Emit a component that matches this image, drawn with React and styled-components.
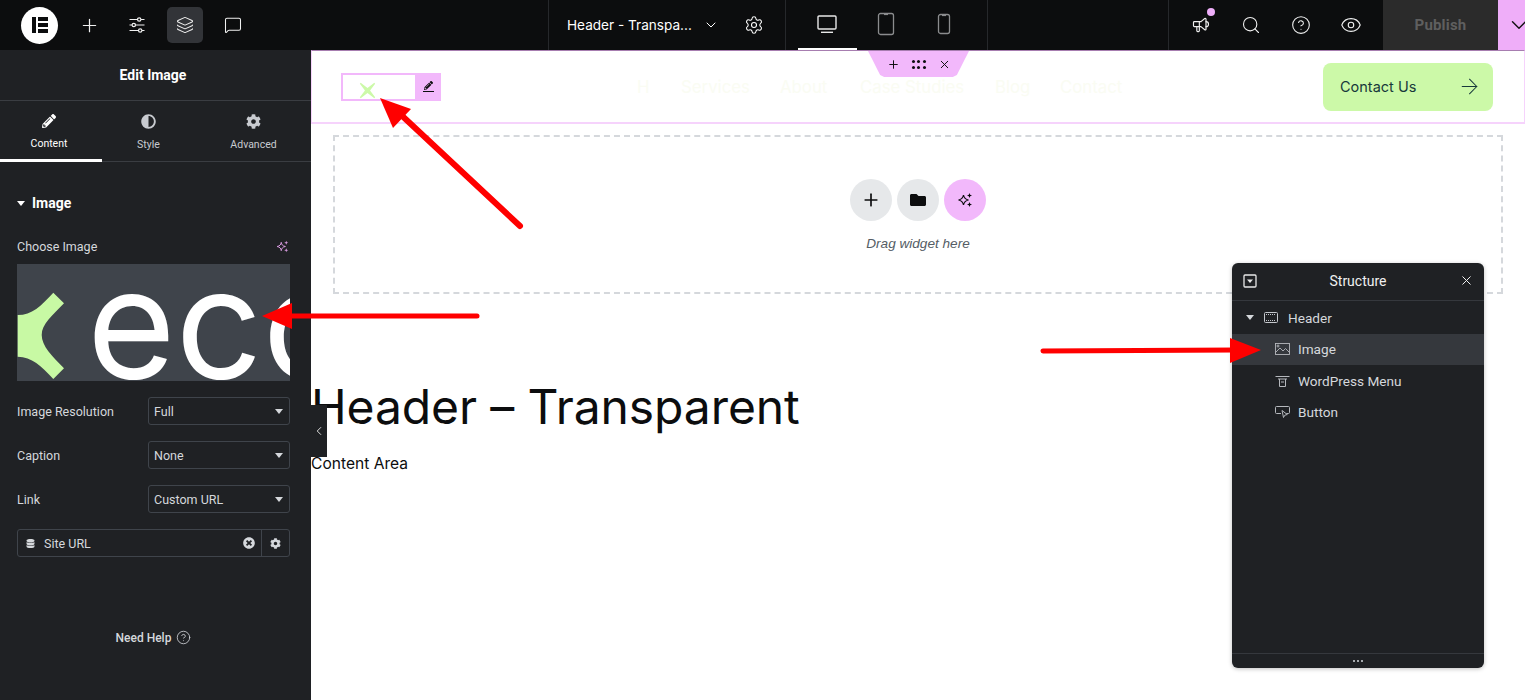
import React from "react";
import styled, { createGlobalStyle } from "styled-components";
import {
  Plus,
  Layers,
  MessageSquare,
  ChevronDown,
  ChevronLeft,
  Settings,
  Search,
  CircleHelp,
  Eye,
  X,
  ArrowRight,
} from "lucide-react";
import { TbSpeakerphone } from "react-icons/tb";
import { FaPencilAlt, FaAdjust, FaCog, FaDatabase, FaTimesCircle, FaFolder } from "react-icons/fa";

const GlobalStyle = createGlobalStyle`
  html, body {
    margin: 0;
    padding: 0;
    background: #fff;
  }
  * {
    box-sizing: border-box;
  }
`;

// Overall page
const Page = styled.div`
  position: relative;
  width: 1525px;
  height: 700px;
  overflow: hidden;
  display: flex;
  flex-direction: column;
  font-family: Roboto, "Liberation Sans", sans-serif;
`;

// Top bar
const TopBar = styled.header`
  height: 50px;
  flex: none;
  display: flex;
  background: #0c0d0e;
  color: #fff;
`;

const ToolGroup = styled.div`
  width: 549px;
  display: flex;
  align-items: center;
  padding-left: 21px;
  gap: 12px;
  border-right: 1px solid #26282b;
`;

const LogoBadge = styled.div`
  width: 37px;
  height: 37px;
  flex: none;
  margin-right: 1px;
  border-radius: 50%;
  background: #fff;
  display: flex;
  align-items: center;
  justify-content: center;
  gap: 2px;
`;

const LogoStem = styled.span`
  width: 4px;
  height: 16px;
  background: #0c0d0e;
`;

const LogoBars = styled.span`
  width: 10px;
  height: 16px;
  display: flex;
  flex-direction: column;
  justify-content: space-between;

  i {
    display: block;
    height: 4px;
    background: #0c0d0e;
  }
`;

const ToolButton = styled.button`
  width: 36px;
  height: 36px;
  padding: 0;
  border: none;
  border-radius: 5px;
  color: #f0f0f0;
  background: ${(p) => (p.$active ? "#323438" : "transparent")};
  display: flex;
  align-items: center;
  justify-content: center;
`;

const DocGroup = styled.div`
  width: 237px;
  display: flex;
  align-items: center;
  padding-left: 18px;
  border-right: 1px solid #26282b;
`;

const DocTitle = styled.span`
  width: 136px;
  font: 400 13.6px Inter, sans-serif;
  white-space: nowrap;
`;

const DocGear = styled.span`
  margin-left: 25px;
  display: flex;
`;

const DeviceGroup = styled.div`
  width: 202px;
  display: flex;
  padding-left: 12px;
  border-right: 1px solid #26282b;
`;

const DeviceTab = styled.div`
  width: 58.5px;
  display: flex;
  align-items: center;
  justify-content: center;
  border-bottom: 2px solid ${(p) => (p.$active ? "#fff" : "transparent")};
  color: ${(p) => (p.$active ? "#e8e8e8" : "#8b8c8e")};
`;

const BarSpacer = styled.div`
  flex: 1;
  border-right: 1px solid #26282b;
`;

const ActionGroup = styled.div`
  width: 214px;
  flex: none;
  display: flex;
  align-items: center;
  padding-left: 7px;
`;

const ActionSlot = styled.span`
  position: relative;
  width: 50px;
  display: flex;
  justify-content: center;
  color: #f0f0f0;
`;

const NoticeDot = styled.i`
  position: absolute;
  top: -7px;
  right: 11px;
  width: 8px;
  height: 8px;
  border-radius: 50%;
  background: #efaef9;
`;

const PublishButton = styled.div`
  width: 115px;
  flex: none;
  display: flex;
  align-items: center;
  justify-content: center;
  background: #2b2b2b;
  color: #5f5f5f;
  font: 700 15px Roboto, sans-serif;
  letter-spacing: 0.2px;
`;

const PublishMore = styled.div`
  width: 27px;
  flex: none;
  overflow: hidden;
  padding-left: 8px;
  display: flex;
  align-items: center;
  background: #efaef9;
  color: #111;

  svg {
    flex: none;
  }
`;

// Main split
const Workspace = styled.div`
  flex: 1;
  display: flex;
  min-height: 0;
`;

// Left settings panel
const SidePanel = styled.aside`
  width: 311px;
  flex: none;
  display: flex;
  flex-direction: column;
  background: #1f2124;
  color: #d5d8dc;
`;

const PanelTitle = styled.div`
  height: 51px;
  flex: none;
  padding-right: 5px;
  display: flex;
  align-items: center;
  justify-content: center;
  border-bottom: 1px solid #3a3d42;
  color: #fff;
  font-size: 14px;
  font-weight: 700;
`;

const PanelTabs = styled.div`
  height: 61px;
  flex: none;
  display: flex;
  border-bottom: 1px solid #3a3d42;
`;

const PanelTab = styled.div`
  width: ${(p) => p.$width}px;
  height: 61px;
  padding: 13px ${(p) => p.$shift || 0}px 0 0;
  display: flex;
  flex-direction: column;
  align-items: center;
  gap: 9px;
  font-size: 10.5px;
  color: ${(p) => (p.$active ? "#fff" : "#c8cbd0")};
  border-bottom: 3px solid ${(p) => (p.$active ? "#fff" : "transparent")};
`;

const PanelBody = styled.div`
  flex: 1;
  display: flex;
  flex-direction: column;
  padding: 32px 21px 0 17px;
`;

const SectionTitle = styled.div`
  display: flex;
  align-items: center;
  gap: 7px;
  height: 18px;
  color: #fff;
  font-size: 14px;
  font-weight: 700;
`;

const Caret = styled.i`
  display: block;
  flex: none;
  width: 0;
  height: 0;
  border-left: 4px solid transparent;
  border-right: 4px solid transparent;
  border-top: 5px solid ${(p) => p.$color || "#fff"};
`;

const FieldHead = styled.div`
  margin-top: 26px;
  height: 16px;
  display: flex;
  align-items: center;
  justify-content: space-between;
  font-size: 12.5px;
`;

const Preview = styled.div`
  margin-top: 10px;
  height: 117px;
  background: #3f444b;
  overflow: hidden;

  svg {
    display: block;
  }
`;

const FieldRow = styled.div`
  margin-top: 16px;
  display: flex;
  align-items: center;
  justify-content: space-between;
  font-size: 12.5px;
`;

const SelectBox = styled.div`
  width: 142px;
  height: 28px;
  padding: 0 6px 0 5px;
  display: flex;
  align-items: center;
  justify-content: space-between;
  border: 1px solid #3f444b;
  border-radius: 3px;
  font-size: 12.5px;
`;

const DynamicField = styled.div`
  margin-top: 16px;
  height: 28px;
  display: flex;
  align-items: center;
  border: 1px solid #3f444b;
  border-radius: 3px;
  font-size: 12.5px;
`;

const DynamicLabel = styled.div`
  flex: 1;
  height: 100%;
  padding: 0 6px 0 8px;
  display: flex;
  align-items: center;
  gap: 9px;
  border-right: 1px solid #3f444b;

  span {
    flex: 1;
  }
`;

const DynamicGear = styled.div`
  width: 27px;
  display: flex;
  justify-content: center;
`;

const HelpLink = styled.div`
  margin-top: 73px;
  display: flex;
  justify-content: center;
  align-items: center;
  gap: 5px;
  font-size: 12px;
  font-weight: 500;
`;

const CollapseHandle = styled.div`
  position: absolute;
  left: 311px;
  top: 405px;
  width: 16px;
  height: 52px;
  display: flex;
  align-items: center;
  justify-content: center;
  background: #1f2124;
  color: #e8e8e8;
`;

// Page canvas
const Canvas = styled.main`
  flex: 1;
  min-width: 0;
  background: #fff;
  color: #0c0d0e;
  font-family: Inter, sans-serif;
`;

const HeaderFrame = styled.section`
  height: 74px;
  display: flex;
  align-items: center;
  padding: 0 30px 0 29px;
  border: 1px solid #f6d3fc;
  border-top-color: #a77db0;
  border-bottom-width: 2px;
`;

const ImageWidget = styled.div`
  width: 100px;
  height: 28px;
  display: flex;
  border: 2px solid #f2b8fb;
  border-right: none;
  background: #fff;
`;

const WidgetLogo = styled.div`
  width: 72px;
  display: flex;
  align-items: flex-end;
  padding-left: 16px;
`;

const WidgetEdit = styled.div`
  flex: 1;
  display: flex;
  align-items: center;
  justify-content: center;
  background: #f2b8fb;
  color: #0c0d0e;
  flex-direction: column;
  gap: 1px;

  i {
    display: block;
    width: 11px;
    height: 1px;
    background: #0c0d0e;
  }
`;

const NavList = styled.nav`
  margin-left: 196px;
  display: flex;
  font-size: 16.8px;
  color: #fafcf3;
`;

const NavItem = styled.span`
  width: ${(p) => p.$width}px;
  white-space: nowrap;
`;

const ContactButton = styled.div`
  margin-left: auto;
  margin-right: 1px;
  width: 170px;
  height: 48px;
  padding: 0 11px 0 17px;
  display: flex;
  align-items: center;
  justify-content: space-between;
  border-radius: 8px;
  background: #ccf9a8;
  color: #17393b;
  font-size: 14.5px;
`;

const SectionHandle = styled.div`
  position: absolute;
  left: 868px;
  top: 51px;
  width: 101px;
  height: 26px;
  display: flex;
  align-items: center;
  justify-content: center;
  gap: 12px;
  background: #f2b8fb;
  clip-path: polygon(0 0, 100% 0, 88% 92%, 84% 100%, 16% 100%, 12% 92%);
  color: #0c0d0e;
`;

const HandleDots = styled.span`
  width: 14px;
  display: grid;
  grid-template-columns: repeat(3, 3px);
  justify-content: space-between;
  row-gap: 3px;

  i {
    width: 3px;
    height: 3px;
    border-radius: 50%;
    background: #0c0d0e;
  }
`;

const DropZone = styled.div`
  height: 159px;
  margin: 11px 22px 0;
  padding-top: 42px;
  display: flex;
  flex-direction: column;
  align-items: center;
  border: 2px dashed #d5d8dc;
`;

const DropButtons = styled.div`
  display: flex;
  gap: 5px;
`;

const RoundButton = styled.span`
  width: 42px;
  height: 42px;
  display: flex;
  align-items: center;
  justify-content: center;
  border-radius: 50%;
  background: ${(p) => (p.$accent ? "#f2b8fb" : "#e6e8ea")};
  color: #0c0d0e;
`;

const DropHint = styled.div`
  margin-top: 15px;
  font: italic 400 13.6px "Liberation Sans", sans-serif;
  color: #555d65;
`;

const PageTitle = styled.h1`
  margin: 84px 0 0;
  font-size: 48px;
  line-height: 58px;
  font-weight: 400;
  letter-spacing: -0.1px;
  white-space: nowrap;
`;

const PageContent = styled.p`
  margin: 18px 0 0;
  font-size: 15.6px;
  line-height: 20px;
`;

// Floating structure panel
const StructurePanel = styled.div`
  position: absolute;
  left: 1232px;
  top: 263px;
  width: 252px;
  height: 405px;
  display: flex;
  flex-direction: column;
  border-radius: 6px;
  background: #1f2124;
  color: #d5d8dc;
  box-shadow: 0 1px 4px rgba(0, 0, 0, 0.25);
`;

const StructureHead = styled.div`
  height: 38px;
  flex: none;
  padding: 0 10px 2px 11px;
  display: flex;
  align-items: center;
  justify-content: space-between;
  border-bottom: 1px solid #35383d;
  color: #f0f0f0;
  font-size: 14px;
`;

const StructureRows = styled.div`
  flex: 1;
  padding-top: 1px;
`;

const StructureRow = styled.div`
  height: 31.5px;
  display: flex;
  align-items: center;
  gap: ${(p) => (p.$root ? 10 : 8)}px;
  padding-left: ${(p) => (p.$root ? 14 : 43)}px;
  background: ${(p) => (p.$active ? "#35383d" : "transparent")};
  font-size: 13.6px;
`;

const StructureFoot = styled.div`
  height: 15px;
  display: flex;
  align-items: center;
  justify-content: center;
  gap: 2px;
  border-top: 1px solid #35383d;

  i {
    width: 2px;
    height: 2px;
    border-radius: 50%;
    background: #d5d8dc;
  }
`;

const Annotations = styled.svg`
  position: absolute;
  inset: 0;
  pointer-events: none;
`;

function SlidersIcon() {
  return (
    <svg width="18" height="18" viewBox="0 0 18 18" fill="none" stroke="currentColor" strokeWidth="1.2">
      <path d="M1.500 3.500h8m3.500 0h3.500M1.500 9h2.500m3.500 0h9M1.500 14.500h9m3.500 0h2.500" />
      <circle cx="11.200" cy="3.500" r="1.700" />
      <circle cx="5.800" cy="9" r="1.700" />
      <circle cx="12.200" cy="14.500" r="1.700" />
    </svg>
  );
}

function DesktopIcon() {
  return (
    <svg width="20" height="20" viewBox="0 0 20 20" fill="none" stroke="currentColor" strokeWidth="1.4">
      <rect x="1" y="2" width="18" height="13" rx="1" />
      <path d="M4 18.300h12" />
    </svg>
  );
}

function TabletIcon() {
  return (
    <svg width="18" height="24" viewBox="0 0 18 24" fill="none" stroke="currentColor" strokeWidth="1.300">
      <rect x="1.500" y="1.500" width="15" height="21" rx="2" />
      <path d="M7 2.300h4" strokeWidth="1.600" />
    </svg>
  );
}

function PhoneIcon() {
  return (
    <svg width="14" height="22" viewBox="0 0 14 22" fill="none" stroke="currentColor" strokeWidth="1.300">
      <rect x="1.500" y="1.500" width="11" height="19" rx="2" />
      <path d="M5 2.300h4" strokeWidth="1.600" />
    </svg>
  );
}

function SparkleIcon({ size = 18, color = "currentColor" }) {
  return (
    <svg width={size} height={size} viewBox="0 0 18 18">
      <path
        d="M7.500 4C8.100 7 9 8.300 12.500 9C9 9.700 8.100 11 7.500 14C6.900 11 6 9.700 2.500 9C6 8.300 6.900 7 7.500 4Z"
        fill="none"
        stroke={color}
        strokeWidth="1.200"
      />
      <path d="M13.500 2L14.200 3.800L16 4.500L14.200 5.200L13.500 7L12.800 5.200L11 4.500L12.800 3.800Z" fill={color} />
      <path d="M13.500 11L14.200 12.800L16 13.500L14.200 14.200L13.500 16L12.800 14.200L11 13.500L12.800 12.800Z" fill={color} />
    </svg>
  );
}

function BrandMark({ size = 20 }) {
  return (
    <svg width={size} height={size} viewBox="0 0 20 20" fill="#ccf9a8">
      <path d="M2 1L10 7L18 1L19 2L13 10L19 18L18 19L10 13L2 19L1 18L7 10L1 2Z" />
    </svg>
  );
}

function CollapseIcon() {
  return (
    <svg width="14" height="14" viewBox="0 0 14 14">
      <rect x="1" y="1" width="12" height="12" rx="1" fill="none" stroke="#e8e8e8" strokeWidth="1.300" />
      <path d="M4 5.500h6L7 9z" fill="#e8e8e8" />
    </svg>
  );
}

function ContainerIcon() {
  return (
    <svg width="14" height="11" viewBox="0 0 14 11" fill="none" stroke="#c4c7cc" strokeWidth="1">
      <rect x="0.500" y="0.500" width="13" height="10" rx="1" />
      <path d="M2 2.500h10M2 8.500h10" strokeDasharray="1 1" />
    </svg>
  );
}

function PictureIcon() {
  return (
    <svg width="15" height="12" viewBox="0 0 15 12" fill="none" stroke="#b5b8bd" strokeWidth="0.900">
      <rect x="0.500" y="0.500" width="14" height="11" />
      <path d="M0.500 9.500L5 5l3 3 2.500-2.500 4 4" />
      <circle cx="3" cy="3" r="1" />
    </svg>
  );
}

function MenuWidgetIcon() {
  return (
    <svg width="15" height="12" viewBox="0 0 15 12" fill="none" stroke="#b5b8bd" strokeWidth="1">
      <path d="M0.500 1.500h14M3 4h9M4.500 4v7.500h6V4M6 7h3" />
    </svg>
  );
}

function ButtonWidgetIcon() {
  return (
    <svg width="15" height="14" viewBox="0 0 15 14" fill="none" stroke="#b5b8bd" strokeWidth="1">
      <path d="M6 8.500H1.500a1 1 0 0 1-1-1v-5a1 1 0 0 1 1-1h12a1 1 0 0 1 1 1v5a1 1 0 0 1-1 1h-2" />
      <path d="M7 5.500l1.500 7 1.300-2.300 2.500-.7z" />
    </svg>
  );
}

function EcoLogo() {
  return (
    <svg width="273" height="117" viewBox="0 0 273 117">
      <path
        d="M0.700 51C15 51 24 42 36.300 28.700L47 39.300C35 52 24.700 60 24.700 71C24.700 82 35 92 47 104.300L36.300 115C24 102 15 92.700 0.700 92.700Z"
        fill="#c8f9a4"
      />
      <text x="70" y="114" fill="#fff" fontFamily="Inter, sans-serif" fontSize="152" fontWeight="400">
        eco
      </text>
    </svg>
  );
}

const DOTS = [0, 1, 2, 3, 4, 5];

function App() {
  return (
    <Page>
      <GlobalStyle />
      <TopBar>
        <ToolGroup>
          <LogoBadge>
            <LogoStem />
            <LogoBars>
              <i />
              <i />
              <i />
            </LogoBars>
          </LogoBadge>
          <ToolButton>
            <Plus size={21} strokeWidth={1.4} />
          </ToolButton>
          <ToolButton>
            <SlidersIcon />
          </ToolButton>
          <ToolButton $active>
            <Layers size={18} strokeWidth={1.4} />
          </ToolButton>
          <ToolButton>
            <MessageSquare size={18} strokeWidth={1.4} />
          </ToolButton>
        </ToolGroup>
        <DocGroup>
          <DocTitle>Header - Transpa...</DocTitle>
          <ChevronDown size={16} strokeWidth={1.5} />
          <DocGear>
            <Settings size={20} strokeWidth={1.3} />
          </DocGear>
        </DocGroup>
        <DeviceGroup>
          <DeviceTab $active>
            <DesktopIcon />
          </DeviceTab>
          <DeviceTab>
            <TabletIcon />
          </DeviceTab>
          <DeviceTab>
            <PhoneIcon />
          </DeviceTab>
        </DeviceGroup>
        <BarSpacer />
        <ActionGroup>
          <ActionSlot>
            <TbSpeakerphone size={20} strokeWidth={1.4} />
            <NoticeDot />
          </ActionSlot>
          <ActionSlot>
            <Search size={20} strokeWidth={1.3} />
          </ActionSlot>
          <ActionSlot>
            <CircleHelp size={20} strokeWidth={1.3} />
          </ActionSlot>
          <ActionSlot>
            <Eye size={22} strokeWidth={1.2} />
          </ActionSlot>
        </ActionGroup>
        <PublishButton>Publish</PublishButton>
        <PublishMore>
          <ChevronDown size={26} strokeWidth={1.3} />
        </PublishMore>
      </TopBar>

      <Workspace>
        <SidePanel>
          <PanelTitle>Edit Image</PanelTitle>
          <PanelTabs>
            <PanelTab $active $width={102} $shift={4}>
              <FaPencilAlt size={14} />
              <span>Content</span>
            </PanelTab>
            <PanelTab $width={94} $shift={1}>
              <FaAdjust size={15} />
              <span>Style</span>
            </PanelTab>
            <PanelTab $width={115}>
              <FaCog size={15} />
              <span>Advanced</span>
            </PanelTab>
          </PanelTabs>
          <PanelBody>
            <SectionTitle>
              <Caret />
              <span>Image</span>
            </SectionTitle>
            <FieldHead>
              <span>Choose Image</span>
              <SparkleIcon size={15} color="#d89be0" />
            </FieldHead>
            <Preview>
              <EcoLogo />
            </Preview>
            <FieldRow>
              <span>Image Resolution</span>
              <SelectBox>
                <span>Full</span>
                <Caret $color="#d5d8dc" />
              </SelectBox>
            </FieldRow>
            <FieldRow>
              <span>Caption</span>
              <SelectBox>
                <span>None</span>
                <Caret $color="#d5d8dc" />
              </SelectBox>
            </FieldRow>
            <FieldRow>
              <span>Link</span>
              <SelectBox>
                <span>Custom URL</span>
                <Caret $color="#d5d8dc" />
              </SelectBox>
            </FieldRow>
            <DynamicField>
              <DynamicLabel>
                <FaDatabase size={9} />
                <span>Site URL</span>
                <FaTimesCircle size={12} />
              </DynamicLabel>
              <DynamicGear>
                <FaCog size={11} />
              </DynamicGear>
            </DynamicField>
            <HelpLink>
              <span>Need Help</span>
              <CircleHelp size={15} strokeWidth={1.3} />
            </HelpLink>
          </PanelBody>
        </SidePanel>

        <Canvas>
          <HeaderFrame>
            <ImageWidget>
              <WidgetLogo>
                <BrandMark size={17} />
              </WidgetLogo>
              <WidgetEdit>
                <FaPencilAlt size={9} />
                <i />
              </WidgetEdit>
            </ImageWidget>
            <NavList>
              <NavItem $width={44}>H</NavItem>
              <NavItem $width={99}>Services</NavItem>
              <NavItem $width={80}>About</NavItem>
              <NavItem $width={135}>Case Studies</NavItem>
              <NavItem $width={65}>Blog</NavItem>
              <NavItem $width={65}>Contact</NavItem>
            </NavList>
            <ContactButton>
              <span>Contact Us</span>
              <ArrowRight size={25} strokeWidth={1} />
            </ContactButton>
          </HeaderFrame>
          <DropZone>
            <DropButtons>
              <RoundButton>
                <Plus size={20} strokeWidth={2} />
              </RoundButton>
              <RoundButton>
                <FaFolder size={16} />
              </RoundButton>
              <RoundButton $accent>
                <SparkleIcon />
              </RoundButton>
            </DropButtons>
            <DropHint>Drag widget here</DropHint>
          </DropZone>
          <PageTitle>Header – Transparent</PageTitle>
          <PageContent>Content Area</PageContent>
        </Canvas>
      </Workspace>

      <CollapseHandle>
        <ChevronLeft size={14} strokeWidth={1.6} />
      </CollapseHandle>

      <SectionHandle>
        <Plus size={13} strokeWidth={1.8} />
        <HandleDots>
          {DOTS.map((d) => (
            <i key={d} />
          ))}
        </HandleDots>
        <X size={13} strokeWidth={1.8} />
      </SectionHandle>

      <StructurePanel>
        <StructureHead>
          <CollapseIcon />
          <span>Structure</span>
          <X size={15} strokeWidth={1.6} />
        </StructureHead>
        <StructureRows>
          <StructureRow $root>
            <Caret $color="#d5d8dc" />
            <ContainerIcon />
            <span>Header</span>
          </StructureRow>
          <StructureRow $active>
            <PictureIcon />
            <span>Image</span>
          </StructureRow>
          <StructureRow>
            <MenuWidgetIcon />
            <span>WordPress Menu</span>
          </StructureRow>
          <StructureRow>
            <ButtonWidgetIcon />
            <span>Button</span>
          </StructureRow>
        </StructureRows>
        <StructureFoot>
          <i />
          <i />
          <i />
        </StructureFoot>
      </StructurePanel>

      <Annotations width="1525" height="700" viewBox="0 0 1525 700">
        <g stroke="#ff0000" strokeWidth="6" strokeLinecap="round" fill="none">
          <path d="M520 226L398 112" />
          <path d="M477 316H288" strokeWidth="5" />
          <path d="M1043 351L1235 350" strokeWidth="5" />
        </g>
        <g fill="#ff0000">
          <path d="M380 98L411 109L393 128Z" />
          <path d="M262 316L292 303V329Z" />
          <path d="M1261 350L1230 338V363Z" />
        </g>
      </Annotations>
    </Page>
  );
}

export default App;
